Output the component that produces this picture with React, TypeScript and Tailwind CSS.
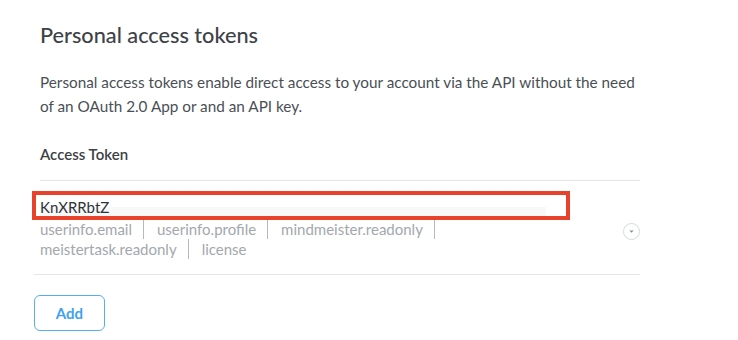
import React from "react";

const scopesList = [
  "userinfo.email",
  "userinfo.profile",
  "mindmeister.readonly",
  "meistertask.readonly",
  "license",
];

export default function App() {
  return (
    <div
      className="relative w-[738px] h-[340px] bg-white overflow-hidden"
      style={{ fontFamily: "Lato, 'Open Sans', sans-serif" }}
    >
      <div className="pl-[40px] pr-[98px] pt-[21px]">
        <h1 className="text-[21.7px] leading-[28px] text-[#3d4247] font-medium">
          Personal access tokens
        </h1>
        <p className="mt-[21px] text-[15.3px] leading-[24px] text-[#4a4f55]">
          Personal access tokens enable direct access to your account via the API without the need of an OAuth 2.0 App or and an API key.
        </p>
        <div className="mt-[26px] text-[15px] leading-[20px] font-semibold text-[#3c4145]">
          Access Token
        </div>
        <div className="mt-[16px] border-t border-[#e3e5e7]" />
      </div>

      <div className="ml-[34px] w-[606px]">
        <div className="flex items-start pl-[6px] pt-[14px] pb-[15px] border-b border-[#e3e5e7]">
          <div className="w-[506px]">
            <div className="relative h-[24px] text-[15px] leading-[24px] text-[#2f3337]">
              <div className="absolute left-0 right-0 top-[12px] h-[10px] bg-[#f8f8f9]" />
              <span className="relative">KnXRRbtZ</span>
            </div>
            <div className="flex flex-wrap text-[15px] leading-[20px] text-[#a3a8ad]">
              {scopesList.map((s, i) => (
                <span
                  key={s}
                  className={
                    i < scopesList.length - 1
                      ? "pr-[11px] mr-[13px] border-r border-[#b5b9bd]"
                      : ""
                  }
                >
                  {s}
                </span>
              ))}
            </div>
          </div>
          <div className="ml-auto mt-[28px]">
            <svg width="17" height="17" viewBox="0 0 17 17">
              <circle cx="8.5" cy="8.5" r="8" fill="white" stroke="#d5d8db" strokeWidth="1" />
              <path d="M6.3 7.6 L10.7 7.6 L8.5 9.8 Z" fill="#8a8f94" />
            </svg>
          </div>
        </div>

        <button className="mt-[20px] w-[71px] h-[36px] rounded-[6px] border border-[#55adf2] text-[#3fa2ef] text-[15px] font-bold bg-white">
          Add
        </button>
      </div>

      <div className="absolute left-[32px] top-[191px] w-[538px] h-[29px] border-[4px] border-[#e8412c] pointer-events-none" />
    </div>
  );
}
